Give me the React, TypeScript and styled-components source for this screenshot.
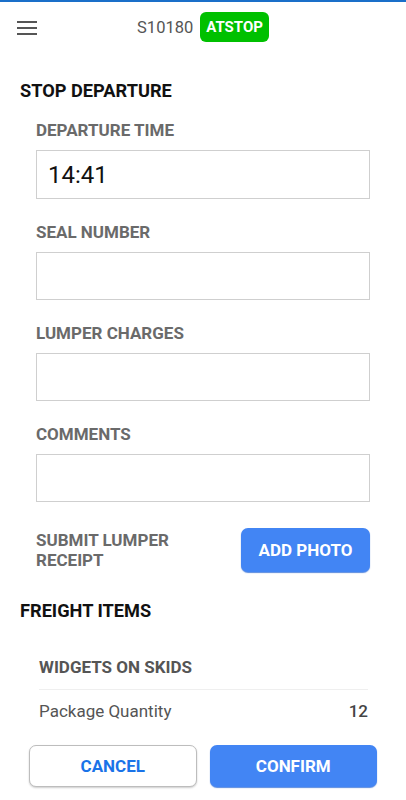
import React from "react";
import styled, { createGlobalStyle } from "styled-components";

const GlobalStyle = createGlobalStyle`
  html, body { margin: 0; padding: 0; background: #fff; }
  body { font-family: Roboto, "Liberation Sans", Arial, sans-serif; -webkit-font-smoothing: antialiased; }
  * { box-sizing: border-box; }
`;

const Page = styled.div`
  height: 100vh;
  display: flex;
  flex-direction: column;
  overflow: hidden;
  border-top: 2px solid #1a6fc9;
`;

const Header = styled.header`
  height: 50px;
  flex: none;
  display: grid;
  grid-template-columns: 56px 1fr 56px;
  align-items: center;
`;

const MenuButton = styled.button`
  border: 0;
  background: none;
  padding: 0 0 0 17px;
  margin-top: 2px;
  display: flex;
  align-items: center;
  color: #555;
`;

const TitleGroup = styled.div`
  display: flex;
  align-items: center;
  justify-content: center;
  gap: 7px;
`;

const StopId = styled.span`
  font-size: 16.5px;
  color: #555;
`;

const Badge = styled.span`
  background: #00c000;
  color: #fff;
  font-weight: 700;
  font-size: 15px;
  line-height: 30px;
  height: 30px;
  padding: 0 6px;
  border-radius: 6px;
`;

const Content = styled.main`
  flex: 1;
  overflow: hidden;
`;

const SectionTitle = styled.h2`
  margin: 28px 0 0 20px;
  font-size: 18.2px;
  line-height: 22px;
  font-weight: 700;
  color: #111;
`;

const Form = styled.div`
  padding: 19px 36px 0;
  display: flex;
  flex-direction: column;
  gap: 24px;
`;

const Field = styled.div`
  display: flex;
  flex-direction: column;
  gap: 10px;
`;

const Label = styled.label`
  font-size: 17px;
  line-height: 19px;
  font-weight: 700;
  color: #6a6a6a;
`;

const Input = styled.div<{ $big?: boolean }>`
  height: ${(p) => (p.$big ? "49px" : "48px")};
  border: 1px solid #cfcfcf;
  padding: 0 11px;
  display: flex;
  align-items: center;
  font-size: ${(p) => (p.$big ? "24px" : "16px")};
  color: #111;
`;

const ReceiptRow = styled.div`
  margin-top: 2px;
  display: flex;
  align-items: center;
  justify-content: space-between;
`;

const ReceiptLabel = styled(Label)`
  line-height: 20px;
  width: 150px;
`;

const PrimaryButton = styled.button<{ $wide?: boolean }>`
  height: ${(p) => (p.$wide ? "42px" : "44px")};
  width: ${(p) => (p.$wide ? "auto" : "129px")};
  border: 0;
  border-radius: 7px;
  background: #4285f4;
  box-shadow: 0 1px 1px rgba(20, 90, 210, 0.7);
  color: #fff;
  font-family: inherit;
  font-weight: 700;
  font-size: 17px;
`;

const SecondaryButton = styled.button`
  height: 42px;
  border: 1px solid #bdbdbd;
  border-radius: 7px;
  background: #fff;
  box-shadow: 0 1px 2px rgba(0, 0, 0, 0.2);
  color: #1a73e8;
  font-family: inherit;
  font-weight: 700;
  font-size: 17px;
`;

const FreightCard = styled.div`
  margin: 36px 38px 0 39px;
`;

const CardHeading = styled.div`
  font-size: 17px;
  line-height: 19px;
  font-weight: 700;
  color: #555;
  padding-bottom: 12px;
  border-bottom: 1px solid #efefef;
`;

const ItemRow = styled.div`
  display: flex;
  justify-content: space-between;
  padding-top: 12px;
  font-size: 17px;
  line-height: 19px;
  color: #555;
`;

const ItemValue = styled.span`
  font-weight: 500;
  color: #444;
`;

const Footer = styled.footer`
  flex: none;
  display: grid;
  grid-template-columns: 1fr 1fr;
  gap: 13px;
  padding: 0 29px 13px;
`;

function MenuIcon() {
  return (
    <svg width="20" height="14" viewBox="0 0 20 14" aria-hidden="true">
      <rect x="0" y="0" width="20" height="2" fill="currentColor" />
      <rect x="0" y="6" width="20" height="2" fill="currentColor" />
      <rect x="0" y="12" width="20" height="2" fill="currentColor" />
    </svg>
  );
}

const fields = [
  { label: "DEPARTURE TIME", value: "14:41", big: true },
  { label: "SEAL NUMBER", value: "" },
  { label: "LUMPER CHARGES", value: "" },
  { label: "COMMENTS", value: "" },
];

export default function App() {
  return (
    <>
      <GlobalStyle />
      <Page>
        <Header>
          <MenuButton aria-label="menu">
            <MenuIcon />
          </MenuButton>
          <TitleGroup>
            <StopId>S10180</StopId>
            <Badge>ATSTOP</Badge>
          </TitleGroup>
          <span />
        </Header>
        <Content>
          <SectionTitle>STOP DEPARTURE</SectionTitle>
          <Form>
            {fields.map((f) => (
              <Field key={f.label}>
                <Label>{f.label}</Label>
                <Input $big={f.big}>{f.value}</Input>
              </Field>
            ))}
            <ReceiptRow>
              <ReceiptLabel>SUBMIT LUMPER RECEIPT</ReceiptLabel>
              <PrimaryButton>ADD PHOTO</PrimaryButton>
            </ReceiptRow>
          </Form>
          <SectionTitle>FREIGHT ITEMS</SectionTitle>
          <FreightCard>
            <CardHeading>WIDGETS ON SKIDS</CardHeading>
            <ItemRow>
              <span>Package Quantity</span>
              <ItemValue>12</ItemValue>
            </ItemRow>
          </FreightCard>
        </Content>
        <Footer>
          <SecondaryButton>CANCEL</SecondaryButton>
          <PrimaryButton $wide>CONFIRM</PrimaryButton>
        </Footer>
      </Page>
    </>
  );
}
